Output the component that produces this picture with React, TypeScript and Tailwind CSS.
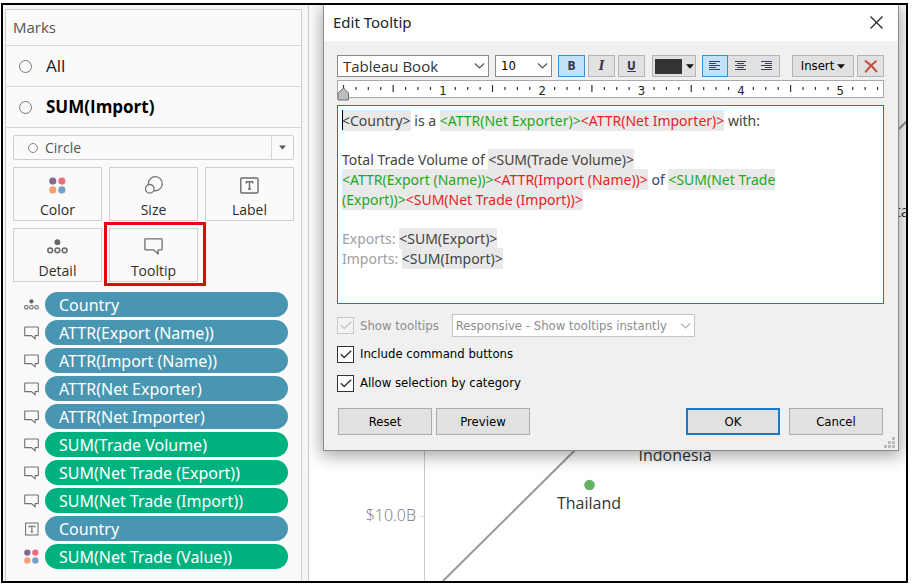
import type { ReactNode } from "react";

const UI = "font-['DejaVu_Sans_Condensed','DejaVu_Sans',sans-serif]";

function ColorIcon({ size }: { size: number }) {
  return (
    <svg width={size} height={size} viewBox="0 0 18 18" aria-hidden="true">
      <circle cx="4" cy="4.3" r="3.8" fill="#84698f" />
      <circle cx="13.6" cy="4.3" r="3.8" fill="#f06c81" />
      <circle cx="4" cy="13.7" r="3.8" fill="#f2a073" />
      <circle cx="13.6" cy="13.7" r="3.8" fill="#7a9fc6" />
    </svg>
  );
}

function SizeIcon() {
  return (
    <svg width="20" height="20" viewBox="0 0 20 20" fill="none" stroke="#757575" strokeWidth="1.3" aria-hidden="true">
      <path d="M4.3 9A7 7 0 1 1 10 15.6" />
      <circle cx="5.8" cy="13.8" r="4.3" />
    </svg>
  );
}

function LabelIcon({ small = false }: { small?: boolean }) {
  return (
    <svg width={small ? 14 : 19} height={small ? 14 : 17} viewBox={small ? "0 0 14 14" : "0 0 19 17"} fill="none" stroke="#6b6b6b" aria-hidden="true">
      {small ? (
        <>
          <rect x="0.6" y="1" width="12.4" height="12" strokeWidth="1" />
          <path d="M4 5.6V4.3h5.8v1.3M6.9 4.3v5.6M5.6 10h2.6" strokeWidth="1.1" />
        </>
      ) : (
        <>
          <rect x="0.8" y="1" width="17.2" height="15" rx="1" strokeWidth="1.4" />
          <path d="M6.3 6.4V4.8h6.4v1.6M9.5 4.8v6.8M8 12h3" strokeWidth="1.4" />
        </>
      )}
    </svg>
  );
}

function DetailIcon({ small = false }: { small?: boolean }) {
  return (
    <svg width={small ? 15 : 21} height={small ? 11 : 15} viewBox="0 0 21 15" fill="none" stroke="#666" strokeWidth="1.5" aria-hidden="true">
      <circle cx="10.4" cy="3.2" r="2.9" fill="#666" stroke="none" />
      <circle cx="3.2" cy="11.3" r="2.4" />
      <circle cx="10.4" cy="11.3" r="2.4" />
      <circle cx="17.6" cy="11.3" r="2.4" />
    </svg>
  );
}

function TooltipIcon({ small = false }: { small?: boolean }) {
  return (
    <svg width={small ? 15 : 19} height={small ? 14 : 17} viewBox="0 0 19 17" fill="none" stroke="#707070" strokeWidth={small ? 1.4 : 1.3} strokeLinejoin="round" aria-hidden="true">
      <path d="M1.4 0.9h16.2q.5 0 .5.5v9.9q0 .5-.5.5h-3.5v4.2l-4.5-4.2H1.4q-.5 0-.5-.5V1.4q0-.5.5-.5z" />
    </svg>
  );
}

function Chevron({ color = "#555" }: { color?: string }) {
  return (
    <svg className="pointer-events-none absolute top-1/2 right-1 -translate-y-1/2" width="11" height="7" viewBox="0 0 11 7" fill="none" stroke={color} strokeWidth="1.2" aria-hidden="true">
      <path d="M1 1l4.5 4.5L10 1" />
    </svg>
  );
}

function Caret() {
  return (
    <svg width="8" height="5" viewBox="0 0 8 5" aria-hidden="true">
      <path d="M0 0.3h8L4 4.7z" fill="#111" />
    </svg>
  );
}

function AlignIcon({ kind }: { kind: "left" | "center" | "right" }) {
  const widths = [11, 7, 11, 7, 11];
  return (
    <svg width="12" height="10" viewBox="0 0 12 10" stroke="#3b4256" strokeWidth="1" aria-hidden="true">
      {widths.map((w, i) => {
        const x = kind === "left" ? 0 : kind === "right" ? 11 - w : (11 - w) / 2;
        return <line key={i} x1={x} x2={x + w} y1={0.5 + i * 2} y2={0.5 + i * 2} />;
      })}
    </svg>
  );
}

function LayerRow({ children, bold = false }: { children: ReactNode; bold?: boolean }) {
  return (
    <button type="button" className={`flex h-[41px] w-full items-center gap-[14px] border-b border-[#d9d9d9] pl-[13px] text-left text-[17px] ${bold ? "font-bold text-black" : "text-[#222]"}`}>
      <span className="size-[13px] rounded-full border border-[#777]" />
      {children}
    </button>
  );
}

function MarkButton({ icon, label }: { icon: ReactNode; label: string }) {
  return (
    <button type="button" className="flex h-[54px] w-full flex-col items-center justify-between border border-[#d0d0d0] bg-[#fafafa] pt-[7px] text-[14px] leading-5 text-[#2d2d2d]">
      <span className="flex h-5 items-center">{icon}</span>
      {label}
    </button>
  );
}

const pills: { icon: ReactNode; text: string; blue: boolean }[] = [
  { icon: <DetailIcon small />, text: "Country", blue: true },
  { icon: <TooltipIcon small />, text: "ATTR(Export (Name))", blue: true },
  { icon: <TooltipIcon small />, text: "ATTR(Import (Name))", blue: true },
  { icon: <TooltipIcon small />, text: "ATTR(Net Exporter)", blue: true },
  { icon: <TooltipIcon small />, text: "ATTR(Net Importer)", blue: true },
  { icon: <TooltipIcon small />, text: "SUM(Trade Volume)", blue: false },
  { icon: <TooltipIcon small />, text: "SUM(Net Trade (Export))", blue: false },
  { icon: <TooltipIcon small />, text: "SUM(Net Trade (Import))", blue: false },
  { icon: <LabelIcon small />, text: "Country", blue: true },
  { icon: <ColorIcon size={15} />, text: "SUM(Net Trade (Value))", blue: false },
];

function MarksCard() {
  return (
    <aside className="w-[306px] shrink-0 border-r border-[#c9c9c9] bg-[#f6f6f6] pt-1 pr-[6px] pl-[2px] font-['Open_Sans',sans-serif]">
      <section className="h-full border border-b-0 border-[#d0d0d0] bg-[#fafafa]">
        <h2 className="h-9 border-b border-[#d9d9d9] pl-[7px] text-[15px] leading-[34px] text-[#555]">Marks</h2>
        <LayerRow>All</LayerRow>
        <LayerRow bold>SUM(Import)</LayerRow>
        <div className="px-[7px] pt-[7px]">
          <div className="relative">
            <select aria-label="Mark type" className="block h-[25px] w-full appearance-none rounded-[2px] border border-[#cfcfcf] bg-[#fafafa] pl-[31px] text-sm text-[#555]">
              <option>Circle</option>
            </select>
            <span className="pointer-events-none absolute top-2 left-[15px] size-[10px] rounded-full border border-[#888]" />
            <span className="pointer-events-none absolute inset-y-px right-px flex w-[22px] items-center justify-center border-l border-[#d9d9d9]">
              <svg width="7" height="5" viewBox="0 0 7 5" aria-hidden="true">
                <path d="M0 0.5h7L3.5 4.5z" fill="#555" />
              </svg>
            </span>
          </div>
          <div className="mt-[7px] grid grid-cols-3 gap-[7px]">
            <MarkButton icon={<ColorIcon size={17} />} label="Color" />
            <MarkButton icon={<SizeIcon />} label="Size" />
            <MarkButton icon={<LabelIcon />} label="Label" />
            <MarkButton icon={<DetailIcon />} label="Detail" />
            <div className="relative">
              <MarkButton icon={<TooltipIcon />} label="Tooltip" />
              <span className="pointer-events-none absolute -top-[6px] -right-2 -bottom-1 -left-[5px] border-3 border-[#dd0b0f]" />
            </div>
          </div>
        </div>
        <ul className="mt-[10px] flex flex-col gap-[3px] pr-[13px] pl-[18px]">
          {pills.map((p, i) => (
            <li key={i} className="flex items-center gap-[6px]">
              <span className="flex w-[15px] justify-center">{p.icon}</span>
              <button type="button" className={`h-[25px] flex-1 rounded-full pt-px pl-[14px] text-left font-['Noto_Sans',sans-serif] text-base leading-6 text-white ${p.blue ? "bg-[#4996b2]" : "bg-[#00b180]"}`}>
                {p.text}
              </button>
            </li>
          ))}
        </ul>
      </section>
    </aside>
  );
}

function Chart() {
  return (
    <svg className="absolute inset-0 h-full w-full font-['Open_Sans',sans-serif] text-base" role="img" aria-label="Import and export scatter plot">
      <line x1="115.5" y1="0" x2="115.5" y2="578" stroke="#c9c9c9" />
      <line x1="110" y1="511.5" x2="115" y2="511.5" stroke="#e3e3e3" />
      <line x1="131" y1="579" x2="600" y2="114" stroke="#989898" strokeWidth="2" />
      <circle cx="280.5" cy="480" r="5.3" fill="#66b266" />
      <text x="107" y="516" textAnchor="end" fill="#777" className="font-light">$10.0B</text>
      <text x="280" y="504" textAnchor="middle" fill="#333">Thailand</text>
      <text x="366" y="456" textAnchor="middle" fill="#333">Indonesia</text>
      <text x="586" y="212" fill="#333">ta</text>
    </svg>
  );
}

function Ruler() {
  const ticks = Array.from({ length: 44 }, (_, i) => i);
  return (
    <div className="relative mt-[3px] h-[18px] border border-[#a8a8a8] bg-white">
      <svg className="absolute inset-0 h-full w-full overflow-visible text-[13px]" role="img" aria-label="Ruler">
        {ticks.map((i) => {
          const x = 5.5 + i * 12.42;
          if (i > 0 && i % 8 === 0)
            return (
              <text key={i} x={x} y="14" textAnchor="middle" fill="#222">
                {i / 8}
              </text>
            );
          return <line key={i} x1={x} x2={x} y1={i % 4 === 0 ? 4 : 6} y2={i % 4 === 0 ? 11 : 9} stroke="#333" strokeWidth="1.2" />;
        })}
        <path d="M5.5 7l5 5v7h-10.5v-7z" fill="#bdbdbd" stroke="#707070" />
      </svg>
    </div>
  );
}

function Token({ tone, children }: { tone: "dark" | "green" | "red"; children: ReactNode }) {
  const color = tone === "dark" ? "text-[#444]" : tone === "green" ? "text-[#1fa81f]" : "text-[#ea1c24]";
  return <span className={`bg-[#e9e9e9] box-decoration-clone py-px ${color}`}>{children}</span>;
}

function Check({ label, disabled = false }: { label: string; disabled?: boolean }) {
  return (
    <label className={`flex items-center gap-[6px] ${disabled ? "text-[#8c8c8c]" : "text-black"}`}>
      <span className="grid size-[17px] place-items-center">
        <input type="checkbox" defaultChecked disabled={disabled} className={`col-start-1 row-start-1 size-[17px] appearance-none border ${disabled ? "border-[#c8c8c8] bg-[#f3f3f3]" : "border-[#333] bg-white"}`} />
        <svg className="pointer-events-none col-start-1 row-start-1" width="12" height="9" viewBox="0 0 12 9" fill="none" stroke={disabled ? "#c4c4c4" : "#333"} strokeWidth="1.4" aria-hidden="true">
          <path d="M0.8 4.2L4.2 7.6L11.2 0.8" />
        </svg>
      </span>
      {label}
    </label>
  );
}

const tool = "flex h-[22px] items-center justify-center border";
const toolOff = "border-[#b5b5b5] bg-[#e1e1e1]";
const toolOn = "border-[#3a8fd4] bg-[#c3e1f8]";
const push = "h-[27px] w-[94px] bg-[#e1e1e1] text-black";

function TooltipDialog() {
  return (
    <div role="dialog" aria-labelledby="dialog-title" className={`absolute top-0 right-[7px] left-[14px] border border-t-0 border-[#8a8a8a] bg-[#f0f0f0] text-[13px] leading-[18px] shadow-[0_3px_16px_2px_rgba(0,0,0,0.35)] ${UI}`}>
      <header className="flex h-9 items-center justify-between bg-white pr-[15px] pb-[2px] pl-[9px]">
        <h1 id="dialog-title" className="font-['Noto_Sans',sans-serif] text-[15px] text-[#222]">Edit Tooltip</h1>
        <button type="button" aria-label="Close">
          <svg width="13" height="13" viewBox="0 0 13 13" stroke="#222" strokeWidth="1.2" aria-hidden="true">
            <path d="M0.5 0.5l12 12M12.5 0.5l-12 12" />
          </svg>
        </button>
      </header>
      <div className="pt-[14px] pr-[14px] pb-[15px] pl-[13px]">
        <div className="flex items-center">
          <div className="relative mr-[6px]">
            <select aria-label="Font" className="block h-[22px] w-[152px] appearance-none border border-[#8a8a8a] bg-white pl-[5px] font-['Open_Sans',sans-serif] text-[15px] leading-5 text-[#333]">
              <option>Tableau Book</option>
            </select>
            <Chevron />
          </div>
          <div className="relative mr-[6px]">
            <select aria-label="Font size" className="block h-[22px] w-[57px] appearance-none border border-[#8a8a8a] bg-white pl-[5px] text-[13px] text-black">
              <option>10</option>
            </select>
            <Chevron />
          </div>
          <div className="mr-[7px] flex gap-[3px] text-[12px] font-bold text-[#343b52]">
            <button type="button" aria-pressed="true" aria-label="Bold" className={`${tool} ${toolOn} w-[27px]`}>B</button>
            <button type="button" aria-label="Italic" className={`${tool} ${toolOff} w-[27px] font-['DejaVu_Serif',serif] italic`}>I</button>
            <button type="button" aria-label="Underline" className={`${tool} ${toolOff} w-[27px] underline`}>U</button>
          </div>
          <button type="button" aria-label="Text color" className={`${tool} ${toolOff} mr-[6px] w-[44px] gap-1`}>
            <span className="h-[15px] w-[27px] bg-[#333]" />
            <Caret />
          </button>
          <div className="flex">
            <button type="button" aria-label="Align left" aria-pressed="true" className={`${tool} ${toolOn} w-[26px]`}><AlignIcon kind="left" /></button>
            <button type="button" aria-label="Align center" className={`${tool} ${toolOff} w-[26px] border-x-0`}><AlignIcon kind="center" /></button>
            <button type="button" aria-label="Align right" className={`${tool} ${toolOff} w-[26px] border-l-0`}><AlignIcon kind="right" /></button>
          </div>
          <button type="button" className={`${tool} ${toolOff} mr-[3px] ml-auto w-[62px] gap-[3px] text-black`}>
            Insert
            <Caret />
          </button>
          <button type="button" aria-label="Clear" className={`${tool} ${toolOff} w-[27px]`}>
            <svg width="14" height="13" viewBox="0 0 14 13" fill="none" stroke="#c0503c" strokeWidth="2" strokeLinecap="round" aria-hidden="true">
              <path d="M1.5 1.2Q7 4.5 12.5 11.5M12 1.2Q6.5 5 1.8 11.6" />
            </svg>
          </button>
        </div>
        <Ruler />
        <div className="mt-[7px] bg-[#1a78c8] p-px">
          <div role="textbox" aria-multiline="true" aria-label="Tooltip text" contentEditable suppressContentEditableWarning className="flex h-[197px] flex-col gap-[19px] bg-white px-[4px] pt-[5px] font-['Noto_Sans',sans-serif] text-[14px] leading-5 text-[#444] outline-none">
            <p>
              <span className="relative"><i className="absolute -top-px bottom-0 left-0 border-l border-black" /></span>
              <Token tone="dark">&lt;Country&gt;</Token> is a <Token tone="green">&lt;ATTR(Net Exporter)&gt;</Token><Token tone="red">&lt;ATTR(Net Importer)&gt;</Token> with:
            </p>
            <p>
              Total Trade Volume of <Token tone="dark">&lt;SUM(Trade Volume)&gt;</Token>
              <br />
              <Token tone="green">&lt;ATTR(Export (Name))&gt;</Token><Token tone="red">&lt;ATTR(Import (Name))&gt;</Token> of <Token tone="green">&lt;SUM(Net Trade<br />(Export))&gt;</Token><Token tone="red">&lt;SUM(Net Trade (Import))&gt;</Token>
            </p>
            <p className="text-[#a0a0a0]">
              Exports: <Token tone="dark">&lt;SUM(Export)&gt;</Token>
              <br />
              Imports: <Token tone="dark">&lt;SUM(Import)&gt;</Token>
            </p>
          </div>
        </div>
        <div className="mt-[10px] flex items-center gap-[13px]">
          <Check label="Show tooltips" disabled />
          <div className="relative">
            <select aria-label="Tooltip behavior" disabled className="block h-[23px] w-[243px] appearance-none border border-[#c4c4c4] bg-white pl-[3px] text-[13px] text-[#8c8c8c] opacity-100">
              <option>Responsive - Show tooltips instantly</option>
            </select>
            <Chevron color="#b0b0b0" />
          </div>
        </div>
        <div className="mt-2 flex flex-col gap-[11px]">
          <Check label="Include command buttons" />
          <Check label="Allow selection by category" />
        </div>
        <div className="mt-4 flex px-px">
          <button type="button" className={`${push} mr-1 border border-[#adadad]`}>Reset</button>
          <button type="button" className={`${push} border border-[#adadad]`}>Preview</button>
          <button type="button" className={`${push} mr-[9px] ml-auto border-2 border-[#1a78c8]`}>OK</button>
          <button type="button" className={`${push} border border-[#adadad]`}>Cancel</button>
        </div>
      </div>
      <svg className="absolute right-[3px] bottom-[2px]" width="11" height="11" viewBox="0 0 11 11" fill="#bcbcbc" aria-hidden="true">
        <path d="M8 0h3v3H8zM4 4h3v3H4zM8 4h3v3H8zM0 8h3v3H0zM4 8h3v3H4zM8 8h3v3H8z" />
      </svg>
    </div>
  );
}

export default function App() {
  return (
    <div className="h-screen bg-white pt-[3px] pr-1 pb-px pl-px">
      <div className="flex h-full overflow-hidden border-2 border-black">
        <MarksCard />
        <main className="relative min-w-0 flex-1 overflow-hidden bg-white">
          <Chart />
          <TooltipDialog />
        </main>
      </div>
    </div>
  );
}
